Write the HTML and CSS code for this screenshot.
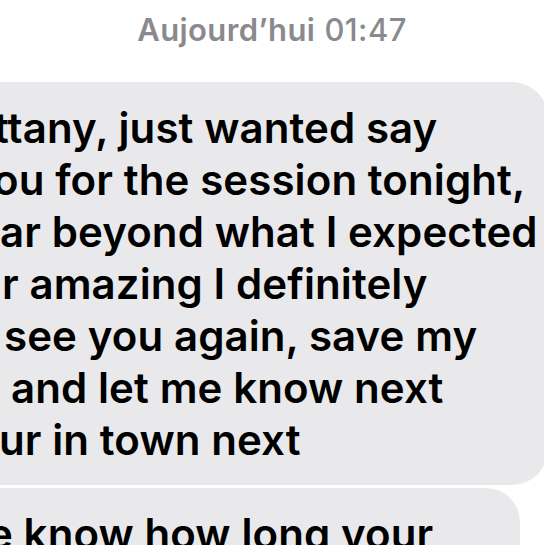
FILE: index.html
```html
<!DOCTYPE html>
<html lang="fr">
<head>
    <meta charset="UTF-8">
    <meta name="viewport" content="width=device-width, initial-scale=1.0">
    <title>Messages</title>
    <link rel="stylesheet" href="styles.css">
</head>
<body>

<div class="thread">
    <div class="timestamp">
        <span class="day">Aujourd’hui</span> <span class="time">01:47</span>
    </div>

    <div class="bubble first">
        <div class="line l1">ttany, just wanted say</div>
        <div class="line l2">ou for the session tonight,</div>
        <div class="line l3">ar beyond what I expected</div>
        <div class="line l4">r amazing I definitely</div>
        <div class="line l5">see you again, save my</div>
        <div class="line l6">and let me know next</div>
        <div class="line l7">ur in town next</div>
    </div>

    <div class="bubble second">
        <div class="line l8">e know how long your</div>
        <div class="line">stay is</div>
    </div>
</div>

</body>
</html>
```

FILE: styles.css
```css
body {
    margin: 0;
    padding: 0;
    background-color: #ffffff;
    font-family: Inter, "Noto Sans", sans-serif;
    overflow: hidden;
}
.thread {
    width: 544px;
    height: 545px;
    overflow: hidden;
}
.timestamp {
    height: 82px;
    padding-top: 11px;
    box-sizing: border-box;
    text-align: center;
    color: #8a8a8e;
    font-size: 31px;
    line-height: 38px;
    letter-spacing: 0.4px;
}
.timestamp .day {
    font-weight: 600;
}
.timestamp .time {
    font-weight: 500;
}
.bubble {
    background-color: #e9e9eb;
    color: #000000;
    font-size: 42px;
    font-weight: 600;
    line-height: 52px;
    letter-spacing: 0.1px;
    white-space: nowrap;
    overflow: hidden;
}
.bubble.first {
    width: 548px;
    padding: 20px 0 19px;
    border-radius: 0 36px 36px 0;
}
.bubble.second {
    width: 520px;
    margin-top: 3px;
    padding: 20px 0 30px;
    border-radius: 0 34px 34px 0;
}
.line {
    height: 52px;
}
.l1 { margin-left: -6px; }
.l2 { margin-left: -7px; }
.l3 { margin-left: 0; }
.l4 { margin-left: 2px; }
.l5 { margin-left: 4px; }
.l6 { margin-left: 11px; }
.l7 { margin-left: -1px; }
.l8 { margin-left: -12px; }
```
